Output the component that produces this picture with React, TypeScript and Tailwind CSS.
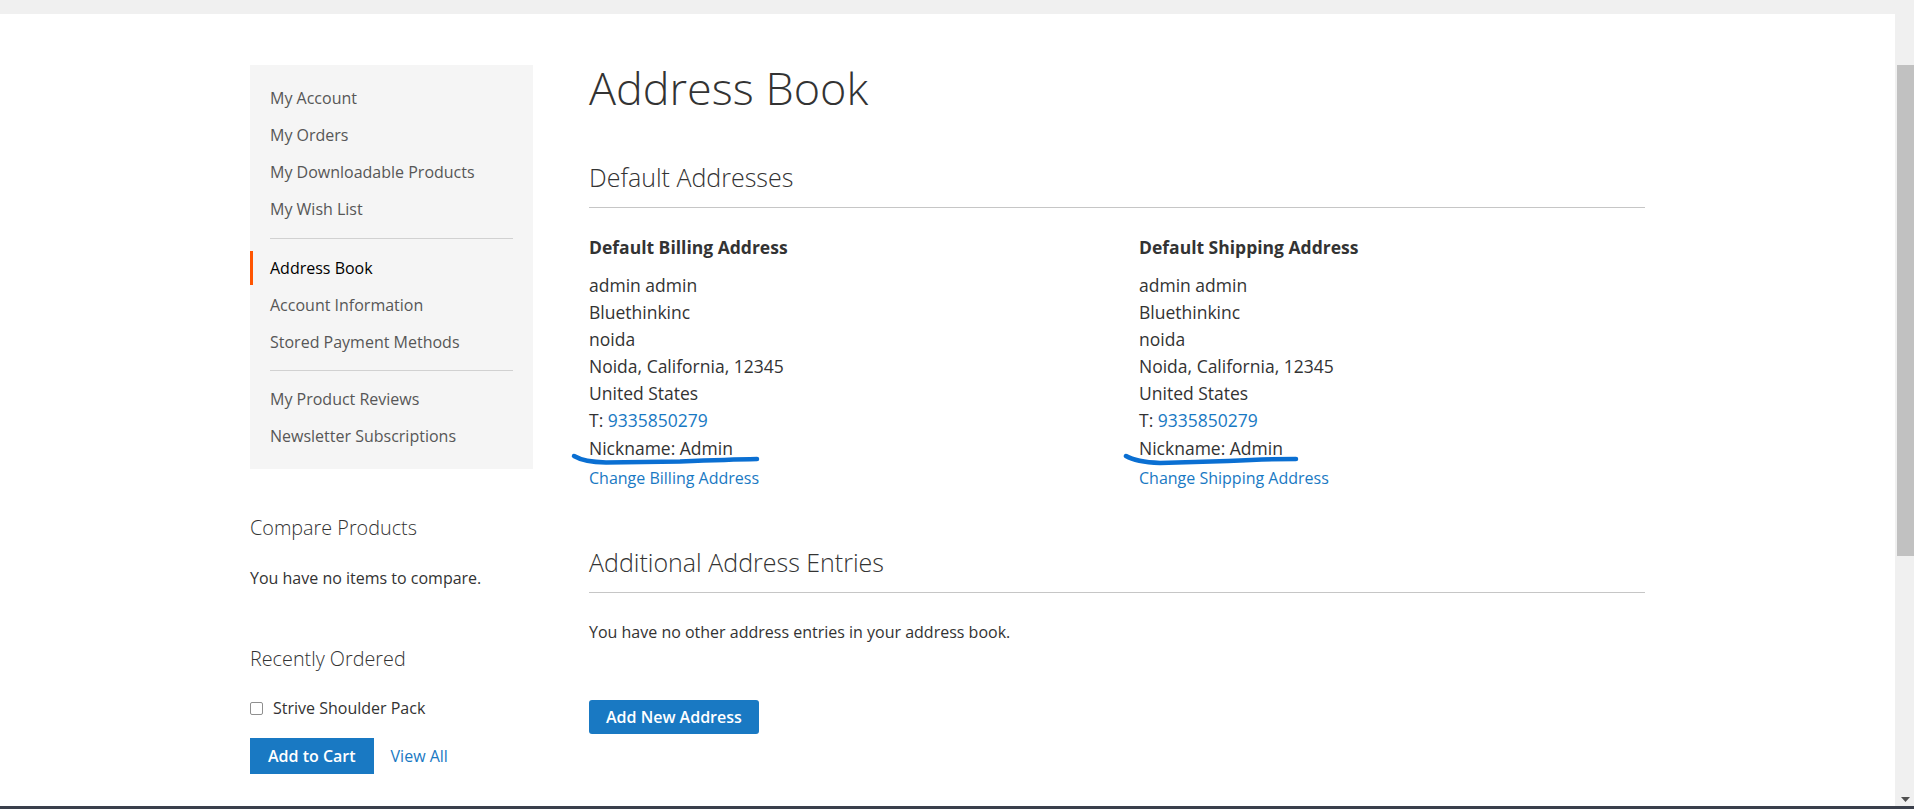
const navTop = ["My Account", "My Orders", "My Downloadable Products", "My Wish List"];
const navMid = ["Address Book", "Account Information", "Stored Payment Methods"];
const navBottom = ["My Product Reviews", "Newsletter Subscriptions"];

const NavItem = ({ label, current }: { label: string; current?: boolean }) => (
  <li
    className={
      "border-l-[3px] pl-[17px] py-[5px] text-[16px] leading-[24px] " +
      (current ? "border-[#ff5501] text-black" : "border-transparent text-[#575757]")
    }
  >
    {label}
  </li>
);

const AddressBox = ({ title, link }: { title: string; link: string }) => (
  <div>
    <h3 className="text-[17.5px] leading-[24px] font-bold text-[#333]">{title}</h3>
    <address className="mt-[13px] not-italic text-[17.5px] leading-[27.1px] text-[#333]">
      <div>admin admin</div>
      <div>Bluethinkinc</div>
      <div>noida</div>
      <div>Noida, California, 12345</div>
      <div>United States</div>
      <div>
        T: <span className="text-[#1979c3]">9335850279</span>
      </div>
      <div>Nickname: Admin</div>
    </address>
    <div className="mt-[4px] text-[16px] leading-[24px] text-[#1979c3]">{link}</div>
  </div>
);

export default function App() {
  return (
    <div className="relative h-[809px] w-full flex flex-col overflow-hidden bg-[#f0f0f0] font-['Open_Sans',sans-serif]">
      <div className="h-[14px] shrink-0" />
      <div className="flex flex-1 min-h-0">
        <div className="flex-1 bg-white">
          <div className="mx-auto w-[1395px] pt-[51px] flex">
            {/* sidebar */}
            <aside className="w-[283px] shrink-0">
              <ul className="bg-[#f5f5f5] pt-[16px] pb-[16px] flex flex-col gap-[3px]">
                {navTop.map((l) => (
                  <NavItem key={l} label={l} />
                ))}
                <li className="my-[9px] mx-[20px] h-px bg-[#d1d1d1]" />
                {navMid.map((l) => (
                  <NavItem key={l} label={l} current={l === "Address Book"} />
                ))}
                <li className="my-[8px] mx-[20px] h-px bg-[#d1d1d1]" />
                {navBottom.map((l) => (
                  <NavItem key={l} label={l} />
                ))}
              </ul>

              <h2 className="mt-[46px] text-[19.8px] leading-[26px] font-light text-[#333]">Compare Products</h2>
              <p className="mt-[25px] text-[16px] leading-[24px] text-[#333]">You have no items to compare.</p>

              <h2 className="mt-[56px] text-[19.8px] leading-[26px] font-light text-[#333]">Recently Ordered</h2>
              <div className="mt-[24px] flex items-center gap-[10px] text-[16px] leading-[24px] text-[#333]">
                <span className="w-[13px] h-[13px] rounded-[2px] border border-[#8f8f8f] bg-white" />
                <span>Strive Shoulder Pack</span>
              </div>
              <div className="mt-[18px] flex items-center">
                <button className="bg-[#1979c3] text-white font-semibold text-[16px] leading-[24px] py-[6px] px-[18px]">
                  Add to Cart
                </button>
                <span className="ml-[17px] text-[16px] leading-[24px] text-[#1979c3]">View All</span>
              </div>
            </aside>

            {/* main */}
            <main className="ml-[56px] w-[1057px]">
              <h1 className="text-[45px] leading-[46px] font-light text-[#333]">Address Book</h1>

              <h2 className="mt-[51px] pb-[15px] border-b border-[#c6c6c6] text-[25px] leading-[30px] font-light text-[#333]">
                Default Addresses
              </h2>
              <div className="mt-[27px] grid grid-cols-[550px_1fr]">
                <AddressBox title="Default Billing Address" link="Change Billing Address" />
                <AddressBox title="Default Shipping Address" link="Change Shipping Address" />
              </div>

              <h2 className="mt-[57px] pb-[15px] border-b border-[#c6c6c6] text-[25px] leading-[30px] font-light text-[#333]">
                Additional Address Entries
              </h2>
              <p className="mt-[27px] text-[16px] leading-[24px] text-[#333]">
                You have no other address entries in your address book.
              </p>
              <button className="mt-[56px] rounded-[3px] bg-[#1979c3] text-white font-semibold text-[16px] leading-[22px] py-[6px] px-[17px]">
                Add New Address
              </button>
            </main>
          </div>
        </div>

        {/* scrollbar */}
        <div className="w-[19px] shrink-0 flex flex-col">
          <div className="h-[51px]" />
          <div className="ml-[2px] h-[491px] bg-[#c1c1c1]" />
          <div className="flex-1" />
          <div className="h-[14px] flex items-center justify-center pl-[2px]">
            <svg width="9" height="5" viewBox="0 0 9 5">
              <path d="M0 0 H9 L4.5 5 Z" fill="#505050" />
            </svg>
          </div>
        </div>
      </div>
      <div className="h-[3px] shrink-0 bg-[#3a3f4b]" />

      {/* hand-drawn annotation strokes */}
      <svg
        className="absolute left-0 top-0 pointer-events-none"
        width="1914"
        height="809"
        viewBox="0 0 1914 809"
        fill="none"
      >
        <path
          d="M574 456 Q584 462 606 462.5 L680 461.5 Q730 459.5 757 459"
          stroke="#0a6fd2"
          strokeWidth="4.5"
          strokeLinecap="round"
          strokeLinejoin="round"
        />
        <path
          d="M1126 456 Q1136 462 1160 463 L1228 461 Q1268 459 1296 459"
          stroke="#0a6fd2"
          strokeWidth="4.5"
          strokeLinecap="round"
          strokeLinejoin="round"
        />
      </svg>
    </div>
  );
}
